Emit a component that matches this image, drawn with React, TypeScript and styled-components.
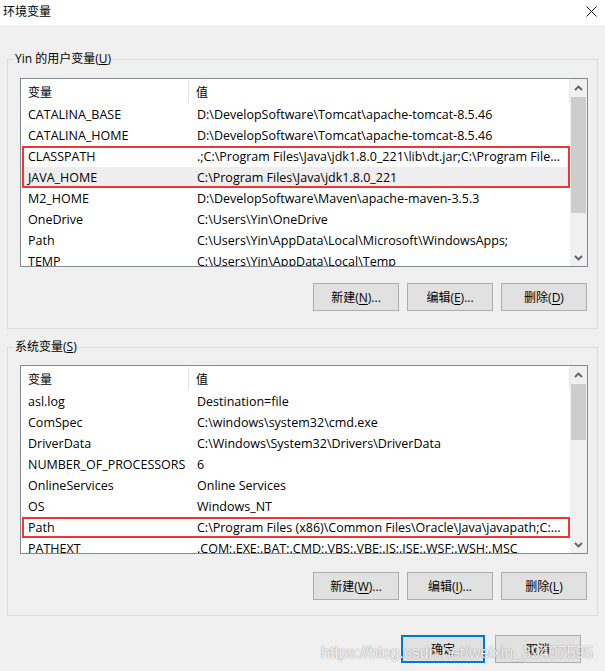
import React from "react";
import styled, { createGlobalStyle } from "styled-components";

const GlobalStyle = createGlobalStyle`
  html, body { margin: 0; padding: 0; background: #f0f0f0; }
  body { font-family: "Open Sans", "Noto Sans CJK SC", sans-serif; font-size: 12.5px; color: #000; }
  * { box-sizing: border-box; }
`;

const Window = styled.div`
  position: relative;
  width: 605px;
  height: 671px;
  background: #f0f0f0;
  display: flex;
  flex-direction: column;
  overflow: hidden;
`;

const TitleBar = styled.div`
  height: 25px;
  background: #fff;
  display: flex;
  align-items: flex-start;
  justify-content: space-between;
  padding: 3px 8px 0 3px;
`;

const TitleText = styled.span`
  font-size: 12px;
  line-height: 16px;
  font-family: "Noto Sans CJK SC", sans-serif;
`;

const CloseIcon = styled.svg`
  margin-top: 3px;
  width: 11px;
  height: 11px;
`;

const Content = styled.div`
  padding: 0 7px;
  display: flex;
  flex-direction: column;
`;

const Group = styled.div<{ $top: number; $bottomPad: number }>`
  margin-top: ${(p) => p.$top}px;
  border: 1px solid #dcdcdc;
  padding: 0 9px ${(p) => p.$bottomPad}px 12px;
  display: flex;
  flex-direction: column;
`;

const Legend = styled.span`
  align-self: flex-start;
  margin: -9px 0 0 -7px;
  padding: 0 2px;
  line-height: 16px;
  background: #f0f0f0;
  font-family: "Open Sans", "Noto Sans CJK SC", sans-serif;
  font-size: 12px;
`;

const ListBox = styled.div<{ $top: number }>`
  margin-top: ${(p) => p.$top}px;
  height: 189px;
  border: 1px solid #828790;
  background: #fff;
  display: flex;
`;

const Table = styled.div`
  flex: 1;
  min-width: 0;
  overflow: hidden;
  display: flex;
  flex-direction: column;
`;

const HeaderRow = styled.div`
  height: 25px;
  flex: none;
  display: flex;
  align-items: center;
`;

const HeaderCell = styled.span<{ $first?: boolean }>`
  width: ${(p) => (p.$first ? "167px" : "auto")};
  flex: ${(p) => (p.$first ? "none" : "1")};
  padding-left: 7px;
  font-family: "Noto Sans CJK SC", sans-serif;
  font-size: 12px;
  line-height: 16px;
`;

const HeaderDivider = styled.span`
  width: 1px;
  height: 23px;
  background: #e5e5e5;
  flex: none;
`;

const Row = styled.div<{ $shaded?: boolean }>`
  height: 21px;
  flex: none;
  display: flex;
  align-items: center;
  background: ${(p) => (p.$shaded ? "#eeeeee" : "transparent")};
  white-space: nowrap;
`;

const NameCell = styled.span`
  width: 168px;
  flex: none;
  padding-left: 7px;
  overflow: hidden;
`;

const ValueCell = styled.span`
  flex: 1;
  min-width: 0;
  padding-left: 8px;
  overflow: hidden;
`;

const Highlight = styled.div`
  position: relative;
  flex: none;
  &::after {
    content: "";
    position: absolute;
    inset: 0 0 0 1px;
    border: 2px solid #f03535;
    pointer-events: none;
  }
`;

const ScrollBar = styled.div`
  width: 17px;
  flex: none;
  background: #f0f0f0;
  display: flex;
  flex-direction: column;
`;

const ArrowBox = styled.div`
  height: 17px;
  flex: none;
  display: flex;
  align-items: center;
  justify-content: center;
`;

const Thumb = styled.div`
  margin: 1px 1px 0;
  background: #cdcdcd;
  flex: none;
`;

const Track = styled.div`
  flex: 1;
`;

const ButtonRow = styled.div<{ $top: number }>`
  margin-top: ${(p) => p.$top}px;
  display: flex;
  justify-content: flex-end;
  gap: 8px;
  padding-right: 1px;
`;

const Button = styled.button<{ $w?: number; $primary?: boolean }>`
  width: ${(p) => p.$w ?? 86}px;
  height: 28px;
  background: #e1e1e1;
  border: ${(p) => (p.$primary ? "2px solid #0078d7" : "1px solid #adadad")};
  font-family: "Open Sans", "Noto Sans CJK SC", sans-serif;
  font-size: 12px;
  color: #000;
  padding: 0;
  display: flex;
  align-items: center;
  justify-content: center;
  u { text-underline-offset: 2px; }
`;

const Footer = styled.div`
  margin-top: 19px;
  display: flex;
  justify-content: flex-end;
  gap: 10px;
  padding-right: 24px;
`;

const Watermark = styled.div`
  position: absolute;
  left: 321px;
  top: 643px;
  font-family: "Liberation Sans", Arial, sans-serif;
  font-size: 16px;
  line-height: 20px;
  color: rgba(255, 255, 255, 0.9);
  text-shadow: 0 0 1px rgba(90, 90, 90, 0.6), 0 0 2px rgba(120, 120, 120, 0.4);
  pointer-events: none;
  white-space: nowrap;
`;

type Var = { name: string; value: string; shaded?: boolean };

const Chevron = ({ up }: { up?: boolean }) => (
  <svg width="9" height="6" viewBox="0 0 9 6">
    <polyline
      points={up ? "1,5 4.5,1.5 8,5" : "1,1 4.5,4.5 8,1"}
      fill="none"
      stroke="#606060"
      strokeWidth="1.8"
    />
  </svg>
);

const VarRow = ({ v }: { v: Var }) => (
  <Row $shaded={v.shaded}>
    <NameCell>{v.name}</NameCell>
    <ValueCell>{v.value}</ValueCell>
  </Row>
);

const VarList = ({
  before,
  highlighted,
  after,
  thumb,
  top,
}: {
  before: Var[];
  highlighted: Var[];
  after: Var[];
  thumb: number;
  top: number;
}) => (
  <ListBox $top={top}>
    <Table>
      <HeaderRow>
        <HeaderCell $first>变量</HeaderCell>
        <HeaderDivider />
        <HeaderCell>值</HeaderCell>
        <HeaderDivider />
      </HeaderRow>
      {before.map((v) => (
        <VarRow key={v.name} v={v} />
      ))}
      <Highlight>
        {highlighted.map((v) => (
          <VarRow key={v.name} v={v} />
        ))}
      </Highlight>
      {after.map((v) => (
        <VarRow key={v.name} v={v} />
      ))}
    </Table>
    <ScrollBar>
      <ArrowBox>
        <Chevron up />
      </ArrowBox>
      <Thumb style={{ height: thumb }} />
      <Track />
      <ArrowBox>
        <Chevron />
      </ArrowBox>
    </ScrollBar>
  </ListBox>
);

export default function App() {
  return (
    <Window>
      <GlobalStyle />
      <TitleBar>
        <TitleText>环境变量</TitleText>
        <CloseIcon viewBox="0 0 11 11">
          <path d="M0.5 0.5 L10.5 10.5 M10.5 0.5 L0.5 10.5" stroke="#111" strokeWidth="1" />
        </CloseIcon>
      </TitleBar>
      <Content>
        <Group $top={34} $bottomPad={17}>
          <Legend>
            Yin 的用户变量(<u>U</u>)
          </Legend>
          <VarList
            top={11}
            thumb={116}
            before={[
              { name: "CATALINA_BASE", value: "D:\\DevelopSoftware\\Tomcat\\apache-tomcat-8.5.46" },
              { name: "CATALINA_HOME", value: "D:\\DevelopSoftware\\Tomcat\\apache-tomcat-8.5.46" },
            ]}
            highlighted={[
              {
                name: "CLASSPATH",
                value: ".;C:\\Program Files\\Java\\jdk1.8.0_221\\lib\\dt.jar;C:\\Program File...",
              },
              { name: "JAVA_HOME", value: "C:\\Program Files\\Java\\jdk1.8.0_221", shaded: true },
            ]}
            after={[
              { name: "M2_HOME", value: "D:\\DevelopSoftware\\Maven\\apache-maven-3.5.3" },
              { name: "OneDrive", value: "C:\\Users\\Yin\\OneDrive" },
              { name: "Path", value: "C:\\Users\\Yin\\AppData\\Local\\Microsoft\\WindowsApps;" },
              { name: "TEMP", value: "C:\\Users\\Yin\\AppData\\Local\\Temp" },
            ]}
          />
          <ButtonRow $top={16}>
            <Button>
              新建(<u>N</u>)...
            </Button>
            <Button>
              编辑(<u>E</u>)...
            </Button>
            <Button>
              删除(<u>D</u>)
            </Button>
          </ButtonRow>
        </Group>
        <Group $top={18} $bottomPad={15}>
          <Legend>
            系统变量(<u>S</u>)
          </Legend>
          <VarList
            top={10}
            thumb={56}
            before={[
              { name: "asl.log", value: "Destination=file" },
              { name: "ComSpec", value: "C:\\windows\\system32\\cmd.exe" },
              { name: "DriverData", value: "C:\\Windows\\System32\\Drivers\\DriverData" },
              { name: "NUMBER_OF_PROCESSORS", value: "6" },
              { name: "OnlineServices", value: "Online Services" },
              { name: "OS", value: "Windows_NT" },
            ]}
            highlighted={[
              {
                name: "Path",
                value: "C:\\Program Files (x86)\\Common Files\\Oracle\\Java\\javapath;C:...",
              },
            ]}
            after={[{ name: "PATHEXT", value: ".COM;.EXE;.BAT;.CMD;.VBS;.VBE;.JS;.JSE;.WSF;.WSH;.MSC" }]}
          />
          <ButtonRow $top={18}>
            <Button>
              新建(<u>W</u>)...
            </Button>
            <Button>
              编辑(<u>I</u>)...
            </Button>
            <Button>
              删除(<u>L</u>)
            </Button>
          </ButtonRow>
        </Group>
      </Content>
      <Footer>
        <Button $w={84} $primary>
          确定
        </Button>
        <Button $w={86}>取消</Button>
      </Footer>
      <Watermark>https://blog.csdn.net/weixin_39407595</Watermark>
    </Window>
  );
}
